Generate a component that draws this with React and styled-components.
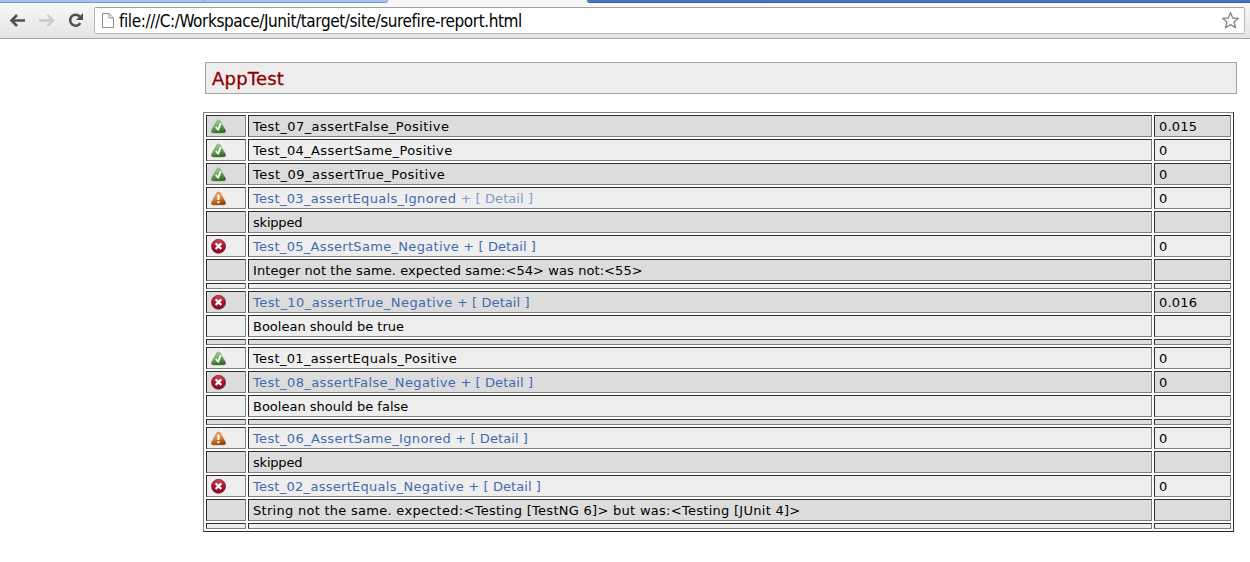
import React from "react";
import styled, { createGlobalStyle, css } from "styled-components";

const Global = createGlobalStyle`
  * { box-sizing: border-box; }
  body { margin: 0; background: #fff; overflow: hidden; font-family: "DejaVu Sans", Verdana, sans-serif; }
`;

const Page = styled.div`
  width: 1250px;
  height: 562px;
  background: #fff;
  overflow: hidden;
`;

const TabStrip = styled.div`
  display: flex;
  height: 3px;
  background: #f6f6f6;
`;

const BackTab = styled.div`
  width: ${(p) => p.$width}px;
  background: #a5c5ef;
  border-bottom: 1px solid #7898c4;
  border-right: 1px solid #7f9fce;
  border-bottom-right-radius: ${(p) => (p.$last ? 3 : 0)}px;
`;

const ActiveTab = styled.div`
  width: 199px;
`;

const Frame = styled.div`
  flex: 1;
  background: #4773c8;
  border-bottom: 1px solid #3d5f9f;
  border-bottom-left-radius: 3px;
`;

const Toolbar = styled.div`
  display: flex;
  align-items: flex-start;
  height: 36px;
  padding: 4px 5px 0 8px;
  background: linear-gradient(#f8f8f8, #e4e4e4);
  border-bottom: 1px solid #a2a2a2;
`;

const NavIcon = styled.svg`
  width: 20px;
  height: 20px;
  margin: 3px 9px 0 0;
  flex: none;
`;

const AddressBar = styled.div`
  display: flex;
  align-items: center;
  flex: 1;
  height: 27px;
  margin-left: -1px;
  padding: 0 4px 0 6px;
  background: #fff;
  border: 1px solid #b9b9b9;
  border-top-color: #a0a0a0;
  border-radius: 2px;
`;

const Url = styled.span`
  flex: 1;
  margin-left: 4px;
  padding-top: 1px;
  font: 17px/24px "DejaVu Sans Condensed", "DejaVu Sans", sans-serif;
  font-stretch: condensed;
  letter-spacing: -0.41px;
  white-space: pre;
  color: #000;
`;

const Report = styled.main`
  padding: 23px 13px 0 203px;
`;

const Heading = styled.h2`
  height: 32px;
  margin: 0 0 18px 2px;
  padding: 0 6px;
  background: #ededed;
  border: 1px solid #a3a3a3;
  color: #900000;
  font-size: 18px;
  font-weight: 400;
  line-height: 32px;
  letter-spacing: 0.2px;
  -webkit-text-stroke: 0.3px #900000;
`;

const Results = styled.div`
  display: flex;
  flex-direction: column;
  gap: 2px;
  width: 1031px;
  padding: 2px;
  border: 1px solid;
  border-color: #808080 #2c2c2c #2c2c2c #808080;
`;

const Row = styled.div`
  display: grid;
  grid-template-columns: 40px 904px 77px;
  gap: 2px;
  height: ${(p) => (p.$thin ? 6 : 22)}px;
`;

const Cell = styled.div`
  display: flex;
  align-items: center;
  overflow: hidden;
  padding: 0 4px;
  background: ${(p) => (p.$dark ? "#dcdcdc" : "#eeeeee")};
  border: 1px solid;
  border-color: #2c2c2c #808080 #808080 #2c2c2c;
`;

const Label = styled.span`
  padding-top: 2px;
  font-size: 13px;
  line-height: 20px;
  white-space: pre;
  color: #000;
  letter-spacing: ${(p) => p.$spacing || 0}px;
  ${(p) => p.$link && css`color: #3f6cb0;`}
`;

const DetailLink = styled.span`
  letter-spacing: 0.08px;
  color: ${(p) => (p.$faint ? "#7f9dc6" : "inherit")};
`;

const StatusSvg = styled.svg`
  width: 15px;
  height: 15px;
  flex: none;
`;

function Status({ kind }) {
  if (kind === "fail") {
    return (
      <StatusSvg viewBox="0 0 15 15">
        <defs>
          <linearGradient id="red" x1="0" y1="0" x2="0" y2="1">
            <stop offset="0" stopColor="#c8435a" />
            <stop offset="0.5" stopColor="#a8152c" />
            <stop offset="1" stopColor="#7c0a20" />
          </linearGradient>
        </defs>
        <circle cx="7.5" cy="7.3" r="7" fill="url(#red)" stroke="#861429" strokeWidth="0.7" />
        <path d="M4.7 4.4 L10.3 10 M10.3 4.4 L4.7 10" stroke="#fff" strokeWidth="2.3" />
      </StatusSvg>
    );
  }
  const ok = kind === "ok";
  const id = ok ? "green" : "orange";
  return (
    <StatusSvg viewBox="0 0 15 15">
      <defs>
        <linearGradient id={id} x1="0" y1="0" x2="0.3" y2="1">
          <stop offset="0" stopColor={ok ? "#b5d6aa" : "#efb880"} />
          <stop offset="0.55" stopColor={ok ? "#74ae63" : "#e68a3c"} />
          <stop offset="1" stopColor={ok ? "#2f6b2a" : "#93420f"} />
        </linearGradient>
      </defs>
      <path
        d="M6 1.6 Q7.5 0.1 9 1.6 L14.6 11.2 Q15.2 14 12.8 14 H2.2 Q-0.2 14 0.4 11.2 Z"
        fill={`url(#${id})`}
        stroke={ok ? "#6b9560" : "#b3703f"}
        strokeWidth="0.5"
      />
      {ok ? (
        <path d="M4.8 8 L7.1 10.6 L9.8 4.2" fill="none" stroke="#fff" strokeWidth="1.8" />
      ) : (
        <path d="M7.5 3.8 V9 M7.5 10.2 V12.2" stroke="#fff" strokeWidth="2.1" />
      )}
    </StatusSvg>
  );
}

const rows = [
  { kind: "ok", text: "Test_07_assertFalse_Positive", spacing: 0.43, time: "0.015" },
  { kind: "ok", text: "Test_04_AssertSame_Positive", spacing: 0.37, time: "0" },
  { kind: "ok", text: "Test_09_assertTrue_Positive", spacing: 0.48, time: "0" },
  { kind: "warn", text: "Test_03_assertEquals_Ignored", spacing: 0.32, detail: true, faint: true, time: "0" },
  { text: "skipped", spacing: -0.2 },
  { kind: "fail", text: "Test_05_AssertSame_Negative", spacing: 0.31, detail: true, time: "0" },
  { text: "Integer not the same. expected same:<54> was not:<55>", spacing: 0.08 },
  { thin: true },
  { kind: "fail", text: "Test_10_assertTrue_Negative", spacing: 0.45, detail: true, time: "0.016" },
  { text: "Boolean should be true" },
  { thin: true },
  { kind: "ok", text: "Test_01_assertEquals_Positive", spacing: 0.32, time: "0" },
  { kind: "fail", text: "Test_08_assertFalse_Negative", spacing: 0.38, detail: true, time: "0" },
  { text: "Boolean should be false" },
  { thin: true },
  { kind: "warn", text: "Test_06_AssertSame_Ignored", spacing: 0.35, detail: true, time: "0" },
  { text: "skipped", spacing: -0.2 },
  { kind: "fail", text: "Test_02_assertEquals_Negative", spacing: 0.28, detail: true, time: "0" },
  { text: "String not the same. expected:<Testing [TestNG 6]> but was:<Testing [JUnit 4]>", spacing: 0.28 },
  { thin: true },
];

export default function App() {
  return (
    <Page>
      <Global />
      <TabStrip>
        <BackTab $width={205} />
        <BackTab $width={183} $last />
        <ActiveTab />
        <Frame />
      </TabStrip>
      <Toolbar>
        <NavIcon viewBox="0 0 20 20">
          <path d="M17 10.5 H4 M9 5 L3.5 10.5 L9 16" fill="none" stroke="#505050" strokeWidth="2.6" />
        </NavIcon>
        <NavIcon viewBox="0 0 20 20">
          <path d="M2 10.5 H15 M10.5 5 L16 10.5 L10.5 16" fill="none" stroke="#c9c9c9" strokeWidth="2.4" />
        </NavIcon>
        <NavIcon viewBox="0 0 20 20">
          <path d="M14.3 13.2 A5.5 5.5 0 1 1 13.8 6.6" fill="none" stroke="#505050" strokeWidth="2.5" />
          <path d="M17 3 V10 H10 Z" fill="#505050" />
        </NavIcon>
        <AddressBar>
          <svg width="14" height="17" viewBox="0 0 14 17">
            <path d="M1.5 1.5 H8 L12.5 6 V15.5 H1.5 Z M8 1.5 V6 H12.5" fill="#fcfcfc" stroke="#8f8f8f" />
          </svg>
          <Url>file:///C:/Workspace/Junit/target/site/surefire-report.html</Url>
          <svg width="19" height="19" viewBox="0 0 19 19">
            <path
              d="M9.5 1.5 L11.7 7 L17.5 7.3 L13 11 L14.6 16.8 L9.5 13.6 L4.4 16.8 L6 11 L1.5 7.3 L7.3 7 Z"
              fill="#fff"
              stroke="#858585"
              strokeWidth="1.3"
              strokeLinejoin="round"
            />
          </svg>
        </AddressBar>
      </Toolbar>
      <Report>
        <Heading>AppTest</Heading>
        <Results>
          {rows.map((r, i) => (
            <Row key={i} $thin={r.thin}>
              <Cell $dark={i % 2 === 0}>{r.kind && <Status kind={r.kind} />}</Cell>
              <Cell $dark={i % 2 === 0}>
                {r.text && (
                  <Label $link={r.detail} $spacing={r.spacing}>
                    {r.text}
                    {r.detail && <DetailLink $faint={r.faint}> + [ Detail ]</DetailLink>}
                  </Label>
                )}
              </Cell>
              <Cell $dark={i % 2 === 0}>{r.time && <Label $spacing={0.2}>{r.time}</Label>}</Cell>
            </Row>
          ))}
        </Results>
      </Report>
    </Page>
  );
}
